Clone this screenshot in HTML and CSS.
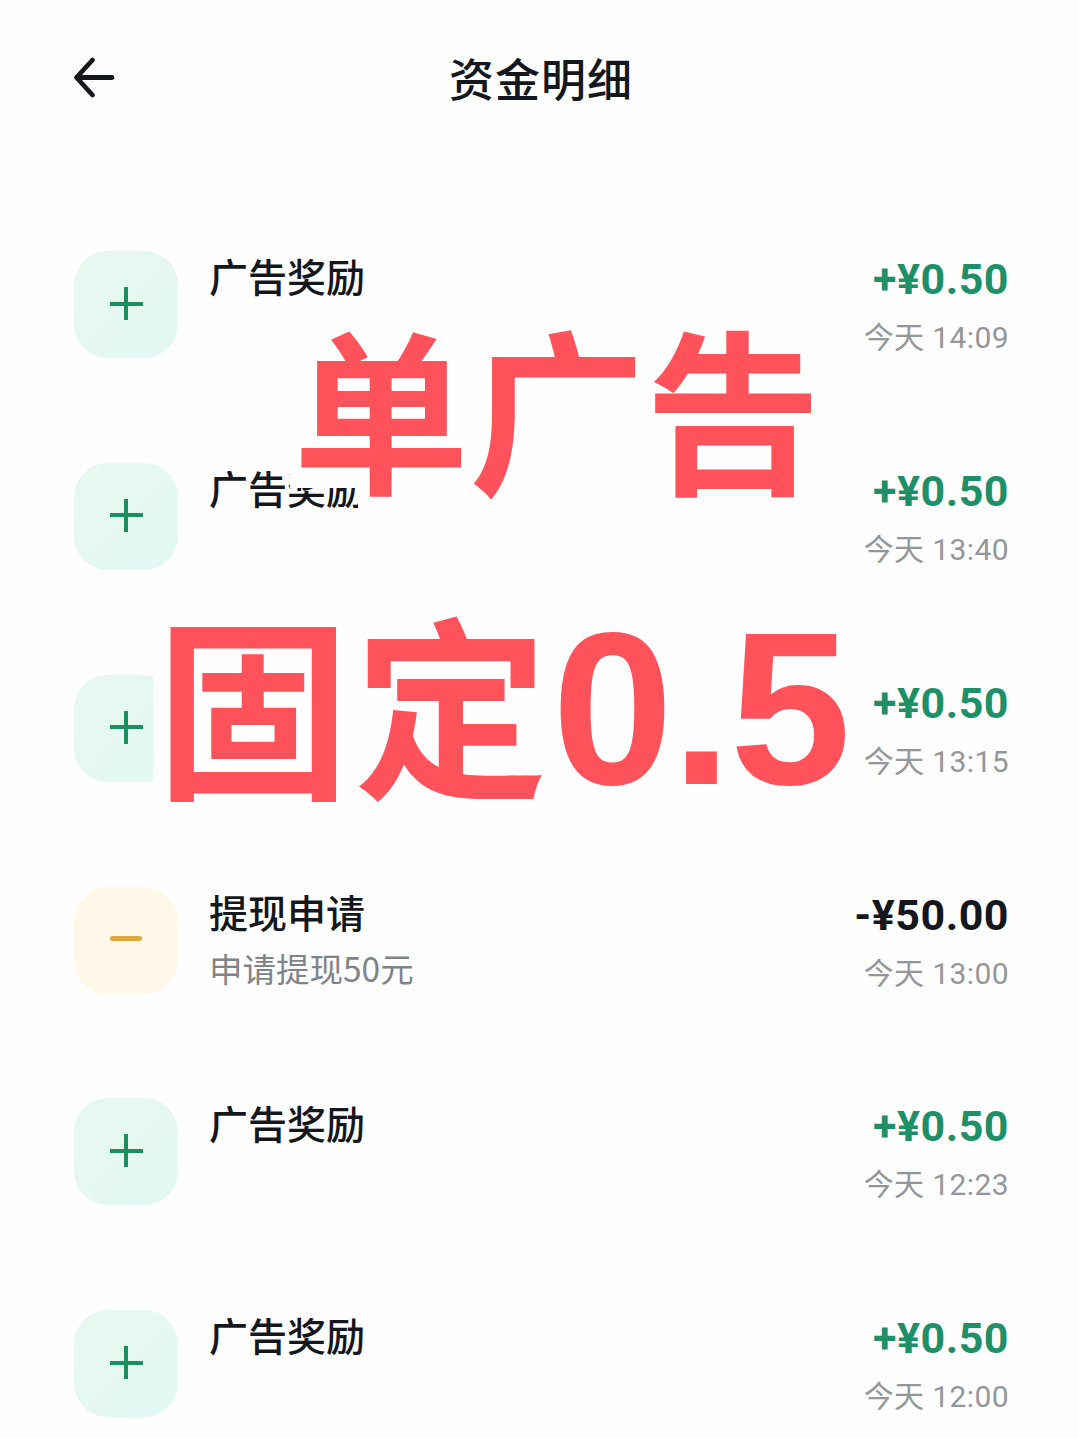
FILE: index.html
```html
<!DOCTYPE html>
<html lang="zh-CN">
<head>
    <meta charset="UTF-8">
    <title>资金明细</title>
    <link rel="stylesheet" href="styles.css">
</head>
<body>
    <div class="page">
        <div class="header">
            <div class="back">
                <svg width="44" height="44" viewBox="0 0 44 44" fill="none" stroke="#14171b" stroke-width="4.8" stroke-linecap="round" stroke-linejoin="round">
                    <path d="M40 21.500H5M20.500 4L4.500 21.500L20.500 39"/>
                </svg>
            </div>
            <h2 class="title">资金明细</h2>
        </div>

        <div class="list">
            <div class="row">
                <div class="icon icon-plus"><span class="plus"></span></div>
                <div class="info"><div class="name">广告奖励</div></div>
                <div class="side"><div class="amount">+¥0.50</div><div class="time">今天 14:09</div></div>
            </div>
            <div class="row">
                <div class="icon icon-plus"><span class="plus"></span></div>
                <div class="info"><div class="name">广告奖励</div></div>
                <div class="side"><div class="amount">+¥0.50</div><div class="time">今天 13:40</div></div>
            </div>
            <div class="row">
                <div class="icon icon-plus"><span class="plus"></span></div>
                <div class="info"></div>
                <div class="side"><div class="amount">+¥0.50</div><div class="time">今天 13:15</div></div>
            </div>
            <div class="row">
                <div class="icon icon-minus"><span class="minus"></span></div>
                <div class="info"><div class="name">提现申请</div><div class="desc">申请提现50元</div></div>
                <div class="side"><div class="amount amount-out">-¥50.00</div><div class="time">今天 13:00</div></div>
            </div>
            <div class="row">
                <div class="icon icon-plus"><span class="plus"></span></div>
                <div class="info"><div class="name">广告奖励</div></div>
                <div class="side"><div class="amount">+¥0.50</div><div class="time">今天 12:23</div></div>
            </div>
            <div class="row">
                <div class="icon icon-plus"><span class="plus"></span></div>
                <div class="info"><div class="name">广告奖励</div></div>
                <div class="side"><div class="amount">+¥0.50</div><div class="time">今天 12:00</div></div>
            </div>
        </div>

        <!-- big sticker text pasted over the list -->
        <div class="mask mask-one"></div>
        <div class="mask mask-two"></div>
        <div class="mask mask-three"></div>
        <div class="sticker sticker-one">单广告</div>
        <div class="sticker sticker-two">固定<span class="sticker-num">0.5</span></div>
    </div>
</body>
</html>
```

FILE: styles.css
```css
body {
    margin: 0;
    background-color: #fefefe;
    font-family: "Noto Sans CJK SC", "Noto Sans", sans-serif;
}
.page {
    position: relative;
    width: 1079px;
    height: 1438px;
    overflow: hidden;
}
.header {
    position: relative;
    display: flex;
    align-items: center;
    height: 251px;
    padding-left: 33px;
    box-sizing: border-box;
    padding-bottom: 96px;
}
.back {
    width: 118px;
    height: 116px;
    display: flex;
    align-items: center;
    justify-content: center;
    padding-left: 4px;
    box-sizing: border-box;
    background-color: #fdfcfe;
    border-radius: 40px;
}
.title {
    position: absolute;
    left: 3px;
    right: 0;
    top: 47px;
    margin: 0;
    text-align: center;
    font-size: 45px;
    line-height: 62px;
    font-weight: 500;
    letter-spacing: 1px;
    color: #14171b;
}
.list {
    padding: 0 70px 0 74px;
}
.row {
    display: flex;
    height: 211.85px;
}
.icon {
    width: 104px;
    height: 107px;
    border-radius: 34px;
    display: flex;
    align-items: center;
    justify-content: center;
}
.icon-plus {
    background: linear-gradient(135deg, #e8f8ef, #e1f8f3);
}
.icon-minus {
    background-color: #fff8e8;
}
.plus {
    width: 33px;
    height: 33px;
    margin-top: -2px;
    background:
        linear-gradient(#1c8f60, #1c8f60) center / 100% 4px no-repeat,
        linear-gradient(#1c8f60, #1c8f60) center / 4px 100% no-repeat;
    border-radius: 2px;
}
.minus {
    width: 32px;
    height: 5px;
    border-radius: 3px;
    background-color: #e0a741;
    margin-top: -3px;
}
.info {
    flex: 1;
    margin-left: 31px;
}
.name {
    font-size: 39px;
    line-height: 56px;
    font-weight: 500;
    margin-top: -4px;
    color: #14171b;
}
.desc {
    font-size: 33.500px;
    line-height: 60px;
    margin-top: -1px;
    color: #7f8488;
}
.side {
    text-align: right;
}
.amount {
    font-family: Roboto, "Liberation Sans", sans-serif;
    font-size: 43px;
    line-height: 56px;
    margin-bottom: 2px;
    font-weight: 700;
    letter-spacing: 0.5px;
    color: #1f8f68;
}
.amount-out {
    color: #14171b;
}
.time {
    font-family: Roboto, "Noto Sans CJK SC", sans-serif;
    font-size: 30px;
    line-height: 58px;
    letter-spacing: 0.4px;
    color: #94979a;
}
.mask {
    position: absolute;
    background-color: #fefefe;
}
.mask-one {
    left: 290px;
    top: 320px;
    width: 570px;
    height: 168px;
}
.mask-two {
    left: 358px;
    top: 488px;
    width: 502px;
    height: 30px;
}
.mask-three {
    left: 153px;
    top: 612px;
    width: 707px;
    height: 200px;
}
.sticker {
    position: absolute;
    white-space: nowrap;
    color: #ff525b;
    font-weight: 700;
}
.sticker-one {
    left: 293px;
    top: 317px;
    font-size: 176px;
    line-height: 176px;
}
.sticker-two {
    left: 156px;
    top: 600px;
    font-size: 194px;
    line-height: 200px;
    letter-spacing: 4px;
}
.sticker-num {
    font-family: "Liberation Sans", sans-serif;
    font-size: 218px;
    font-weight: 700;
    letter-spacing: -2px;
    margin-left: 0;
}
```
